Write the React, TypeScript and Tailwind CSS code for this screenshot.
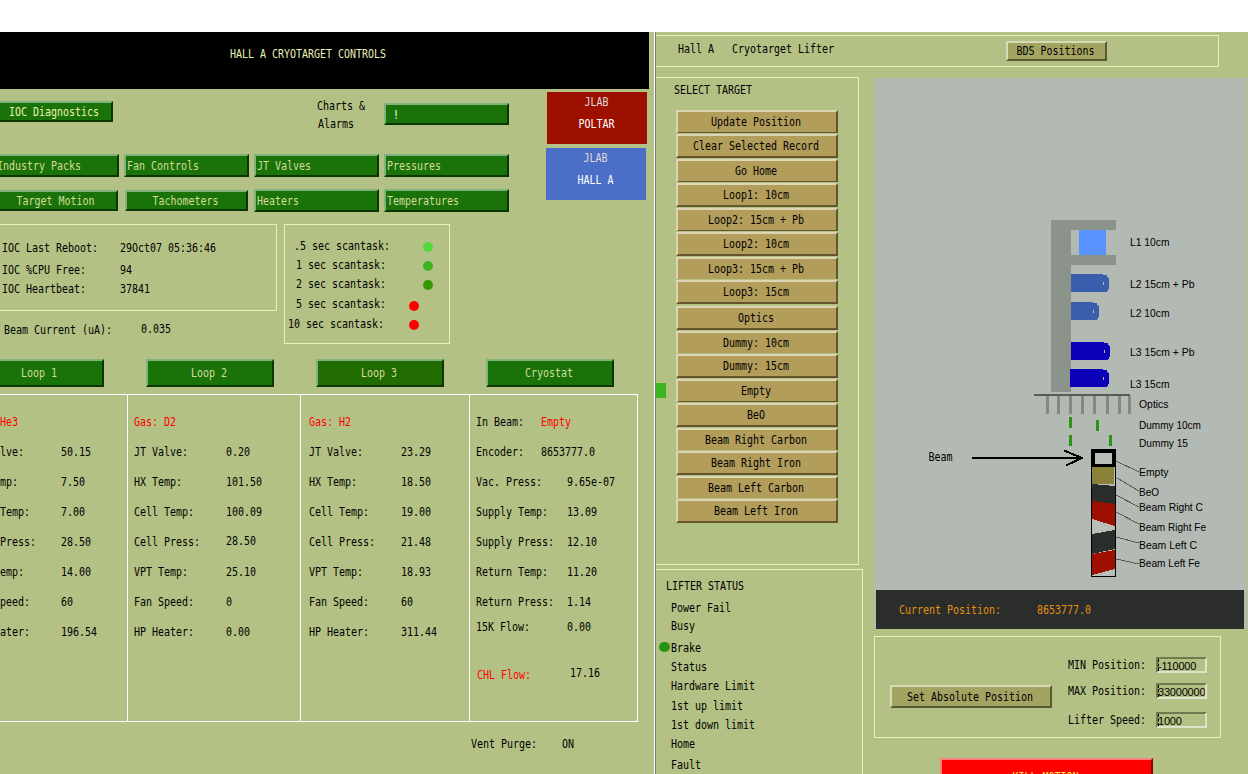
import type { ReactNode } from 'react'
import clsx from 'clsx'

interface TextProps {
  children: ReactNode
  className?: string
}

// Fixed 6x13 terminal cell: narrow glyphs, stretched vertically
function Text({ children, className }: TextProps) {
  return (
    <div
      className={clsx(
        "h-[13px] shrink-0 scale-y-125 whitespace-pre font-['DejaVu_Sans_Mono',monospace] text-[10px] leading-[13px] tracking-[-0.02px]",
        className
      )}
    >
      {children}
    </div>
  )
}

const tones = {
  green: 'bg-[#1a7309] text-[#d4db9d] border-t-[#80b37b] border-l-[#80b37b] border-r-[#0b3604] border-b-[#0b3604]',
  active: 'bg-[#216c00] text-[#d4db9d] border-t-[#80b37b] border-l-[#80b37b] border-r-[#0b3604] border-b-[#0b3604]',
  tan: 'bg-[#b39d5b] text-black border-t-[#ddd6b4] border-l-[#ddd6b4] border-r-[#64552f] border-b-[#64552f]',
  olive: 'bg-[#a4a462] text-black border-t-[#d8d9b6] border-l-[#d8d9b6] border-r-[#5a5a37] border-b-[#5a5a37]',
  red: 'bg-[#fd0000] text-[#fbf34a] border-t-[#ff7f7f] border-l-[#ff7f7f] border-r-[#820400] border-b-[#820400]',
}

interface ButtonProps {
  label: string
  className: string
  tone?: keyof typeof tones
  left?: boolean
}

function Button({ label, className, tone = 'green', left }: ButtonProps) {
  return (
    <button
      className={clsx(
        'flex shrink-0 items-start border-2',
        left ? 'justify-start pl-px' : 'justify-center pr-[2px]',
        tones[tone],
        className
      )}
    >
      <Text>{label}</Text>
    </button>
  )
}

const scanTasks = [
  { label: '.5 sec scantask:', row: 'mt-[14px] ml-[9px]', dot: 'ml-[33px] mt-[3px] bg-[#52da3b]' },
  { label: '1 sec scantask:', row: 'mt-[6px] ml-[11px]', dot: 'ml-[37px] mt-[3px] bg-[#3cb420]' },
  { label: '2 sec scantask:', row: 'mt-[6px] ml-[11px]', dot: 'ml-[37px] mt-[3px] bg-[#339900]' },
  { label: '5 sec scantask:', row: 'mt-[7px] ml-[11px]', dot: 'ml-[23px] mt-[4px] bg-[#fd0000]' },
  { label: '10 sec scantask:', row: 'mt-[7px] ml-[3px]', dot: 'ml-[25px] mt-[3px] bg-[#fd0000]' },
]

interface Reading {
  label: string
  value?: string
  row?: string
  labelClass?: string
  valueClass?: string
}

const loopLabels = ['JT Valve:', 'HX Temp:', 'Cell Temp:', 'Cell Press:', 'VPT Temp:', 'Fan Speed:', 'HP Heater:']

const loopReadings = (gas: string, values: string[]): Reading[] => [
  { label: `Gas: ${gas}`, labelClass: 'text-[#fd0000]' },
  ...loopLabels.map((label, i) => ({ label, value: values[i] })),
]

const loop1 = loopReadings('He3', ['50.15', '7.50', '7.00', '28.50', '14.00', '60', '196.54'])
const loop2 = loopReadings('D2', ['0.20', '101.50', '100.09', '28.50', '25.10', '0', '0.00'])
loop2[4].valueClass = '-mt-px'
const loop3 = loopReadings('H2', ['23.29', '18.50', '19.00', '21.48', '18.93', '60', '311.44'])

const cryostat: Reading[] = [
  { label: 'In Beam:', value: 'Empty', valueClass: '-ml-[26px] text-[#fd0000]' },
  { label: 'Encoder:', value: '8653777.0', valueClass: '-ml-[26px]' },
  { label: 'Vac. Press:', value: '9.65e-07' },
  { label: 'Supply Temp:', value: '13.09' },
  { label: 'Supply Press:', value: '12.10' },
  { label: 'Return Temp:', value: '11.20' },
  { label: 'Return Press:', value: '1.14' },
  { label: '15K Flow:', value: '0.00', row: 'mt-3' },
  { label: 'CHL Flow:', value: '17.16', row: 'mt-[33px]', labelClass: 'mt-[2px] pl-px text-[#fd0000]', valueClass: 'ml-[3px]' },
]

function Readings({ rows, className, labelWidth }: { rows: Reading[]; className: string; labelWidth: string }) {
  return (
    <div className={clsx('shrink-0 border-white pt-5', className)}>
      {rows.map((r, i) => (
        <div key={r.label} className={clsx('flex items-start', i > 0 && (r.row ?? 'mt-[17px]'))}>
          <Text className={clsx(labelWidth, r.labelClass)}>{r.label}</Text>
          {r.value && <Text className={r.valueClass}>{r.value}</Text>}
        </div>
      ))}
    </div>
  )
}

function ControlsPanel() {
  return (
    <div className="h-[742px] w-[654px] shrink-0 overflow-hidden">
      <div className="h-[57px] w-[649px] bg-black pl-[230px] pt-[15px] text-[#ebf1b5]">
        <Text>HALL A CRYOTARGET CONTROLS</Text>
      </div>

      <div className="flex">
        <div className="w-[509px] shrink-0">
          <div className="flex h-[65px] items-start">
            <Button label="IOC Diagnostics" className="-ml-[3px] mt-3 h-[21px] w-[116px] pt-[2px] text-[#ebf1b5]" />
            <div className="ml-[204px] w-[67px] pt-[10px]">
              <Text>{'Charts &'}</Text>
              <Text className="ml-px mt-[5px]">Alarms</Text>
            </div>
            <Button label=" !" left className="mt-[14px] h-[22px] w-[125px] pt-[3px] text-white" />
          </div>
          <div className="-ml-[6px] flex gap-[5px]">
            {['Industry Packs', 'Fan Controls', 'JT Valves', 'Pressures'].map((label) => (
              <Button key={label} label={label} left className="h-[23px] w-[125px] pt-[3px]" />
            ))}
          </div>
          <div className="-ml-[5px] mt-3 flex items-start">
            <Button label="Target Motion" className="mt-px h-[21px] w-[123px] pt-[2px]" />
            <Button label="Tachometers" className="ml-[7px] mt-px h-[21px] w-[123px] pt-[2px]" />
            <Button label="Heaters" left className="ml-[6px] h-[23px] w-[125px] pt-[3px]" />
            <Button label="Temperatures" left className="ml-[5px] h-[23px] w-[125px] pt-[3px]" />
          </div>
        </div>
        <div className="ml-[37px] mt-[3px] flex flex-col gap-1 text-white">
          <div className="ml-px flex h-[52px] w-[100px] flex-col items-center gap-[9px] bg-[#9d1000] pr-px pt-[3px]">
            <Text className="text-[#dadada]">JLAB</Text>
            <Text>POLTAR</Text>
          </div>
          <div className="flex h-[52px] w-[100px] flex-col items-center gap-[9px] bg-[#4b6ec7] pr-px pt-[3px]">
            <Text className="text-[#dadada]">JLAB</Text>
            <Text>HALL A</Text>
          </div>
        </div>
      </div>

      <div className="mt-3 flex items-start">
        <div className="w-[284px] shrink-0">
          <div className="-ml-[3px] h-[87px] w-[280px] border border-[#ebf1b5] pl-1 pt-4">
            <div className="flex">
              <Text className="w-[118px]">IOC Last Reboot:</Text>
              <Text>29Oct07 05:36:46</Text>
            </div>
            <div className="mt-[9px] flex">
              <Text className="w-[118px]">IOC %CPU Free:</Text>
              <Text>94</Text>
            </div>
            <div className="mt-[6px] flex">
              <Text className="w-[118px]">IOC Heartbeat:</Text>
              <Text>37841</Text>
            </div>
          </div>
          <div className="ml-1 mt-3 flex items-start">
            <Text className="w-[137px]">Beam Current (uA):</Text>
            <Text className="-mt-px">0.035</Text>
          </div>
        </div>
        <div className="h-[120px] w-[166px] border border-[#ebf1b5]">
          {scanTasks.map((task) => (
            <div key={task.label} className={clsx('flex h-[13px] items-start', task.row)}>
              <Text>{task.label}</Text>
              <div className={clsx('size-[10px] shrink-0 rounded-full', task.dot)} />
            </div>
          ))}
        </div>
      </div>

      <div className="-ml-6 mt-[15px] flex gap-[42px]">
        <Button label="Loop 1" className="h-7 w-32 pt-[5px]" />
        <Button label="Loop 2" className="h-7 w-32 pt-[5px]" />
        <Button label="Loop 3" tone="active" className="h-7 w-32 pt-[5px]" />
        <Button label="Cryostat" className="h-7 w-32 pt-[5px]" />
      </div>

      <div className="mt-[7px] flex h-[328px] w-[638px] border-y border-white">
        <Readings rows={loop1} className="-ml-[30px] w-[157px]" labelWidth="w-[91px]" />
        <Readings rows={loop2} className="w-[173px] border-l pl-[6px]" labelWidth="w-[92px]" />
        <Readings rows={loop3} className="w-[169px] border-l pl-2" labelWidth="w-[92px]" />
        <Readings rows={cryostat} className="w-[169px] border-x pl-[6px]" labelWidth="w-[91px]" />
      </div>

      <div className="ml-[471px] mt-[15px] flex">
        <Text className="w-[91px]">Vent Purge:</Text>
        <Text>ON</Text>
      </div>
    </div>
  )
}

// Slots are 22-24px tall, the shorter ones clip the bottom bevel of the button
const targets = [
  { label: 'Update Position', slot: 'h-[23px]' },
  { label: 'Clear Selected Record', slot: 'h-[24px]' },
  { label: 'Go Home', slot: 'h-[23px]' },
  { label: 'Loop1: 10cm', slot: 'h-[24px]' },
  { label: 'Loop2: 15cm + Pb', slot: 'h-[23px]' },
  { label: 'Loop2: 10cm', slot: 'h-[24px]' },
  { label: 'Loop3: 15cm + Pb', slot: 'h-[22px]' },
  { label: 'Loop3: 15cm', slot: 'h-[24px] mb-px' },
  { label: 'Optics', slot: 'h-[24px]' },
  { label: 'Dummy: 10cm', slot: 'h-[22px]' },
  { label: 'Dummy: 15cm', slot: 'h-[24px]' },
  { label: 'Empty', slot: 'h-[23px]' },
  { label: 'BeO', slot: 'h-[24px]' },
  { label: 'Beam Right Carbon', slot: 'h-[22px]' },
  { label: 'Beam Right Iron', slot: 'h-[24px]' },
  { label: 'Beam Left Carbon', slot: 'h-[22px]' },
  { label: 'Beam Left Iron', slot: 'h-[24px]' },
]

const statuses = [
  { label: 'Power Fail', row: 'mt-[9px]' },
  { label: 'Busy', row: 'mt-[5px]' },
  { label: 'Brake', row: 'mt-[9px]', on: true },
  { label: 'Status', row: 'mt-[6px]' },
  { label: 'Hardware Limit', row: 'mt-[6px]' },
  { label: '1st up limit', row: 'mt-[7px]' },
  { label: '1st down limit', row: 'mt-[6px]' },
  { label: 'Home', row: 'mt-[6px]' },
  { label: 'Fault', row: 'mt-[8px]' },
]

const labels = [
  { text: 'L1 10cm', x: 1130, y: 246, w: 39.5 },
  { text: 'L2 15cm + Pb', x: 1130, y: 288, w: 64.5 },
  { text: 'L2 10cm', x: 1130, y: 317, w: 39.5 },
  { text: 'L3 15cm + Pb', x: 1130, y: 356, w: 64.5 },
  { text: 'L3 15cm', x: 1130, y: 388, w: 39.5 },
  { text: 'Optics', x: 1139, y: 408, w: 29.5 },
  { text: 'Dummy 10cm', x: 1139, y: 429, w: 62 },
  { text: 'Dummy 15', x: 1139, y: 447, w: 49 },
  { text: 'Empty', x: 1139, y: 476, w: 29.5 },
  { text: 'BeO', x: 1139, y: 496, w: 20 },
  { text: 'Beam Right C', x: 1139, y: 511, w: 64 },
  { text: 'Beam Right Fe', x: 1139, y: 531, w: 67 },
  { text: 'Beam Left C', x: 1139, y: 549, w: 58 },
  { text: 'Beam Left Fe', x: 1139, y: 567, w: 61 },
]

const cells = [
  { x: 1071, y: 274, w: 38, fill: '#3a5eab' },
  { x: 1071, y: 302, w: 28, fill: '#3a5eab' },
  { x: 1071, y: 342, w: 39, fill: '#0a00b8' },
  { x: 1070, y: 369, w: 39, fill: '#0a00b8' },
]

const leaders = [
  [1116, 461, 1139, 472],
  [1117, 478, 1139, 491],
  [1116, 495, 1139, 507],
  [1116, 512, 1139, 524],
  [1116, 537, 1139, 543],
  [1116, 559, 1139, 564],
]

function LifterDiagram() {
  return (
    <svg className="block h-[512px] w-[373px]" viewBox="874 78 373 512">
      <g shapeRendering="crispEdges">
        <path d="M1051 220h65v10h-45v25h45v10h-45v127h-20z" fill="#8b938b" />
        <rect x="1079" y="230" width="27" height="25" fill="#5893ff" />
        {cells.map((c) => (
          <g key={c.y}>
            <path
              d={`M${c.x} ${c.y}h${c.w - 6}v1h4v2h1v1h1v11h-1v2h-1v1h-${c.w - 2}z`}
              fill={c.fill}
            />
            <rect x={c.x + c.w - 6} y={c.y + 8} width="1" height="3" fill="#b3bab3" />
          </g>
        ))}

        <rect x="1034" y="394" width="96" height="2" fill="#5a5a5a" />
        {[1046, 1057, 1069, 1081, 1093, 1106, 1118, 1128].map((x) => (
          <rect key={x} x={x} y="396" width="3" height="18" fill="#858985" />
        ))}
        <path d="M1069 417h3v11h-3zM1096 420h3v11h-3zM1069 435h3v11h-3zM1109 435h3v11h-3z" fill="#289315" />

        <rect x="972" y="457" width="109" height="2" />
        <path d="M1064 450.500L1082 458L1066 465.500" fill="none" stroke="#000" strokeWidth="2" />

        {/* solid target ladder */}
        <rect x="1091.500" y="449.500" width="24" height="127" fill="#b8beb8" stroke="#000" />
        <path d="M1091 449h25v18h-25zM1095 453v11h17v-11z" fillRule="evenodd" />
        <rect x="1092" y="467" width="22" height="17" fill="#8b8239" />
        <path d="M1092 484L1115 486V504L1092 501zM1092 534L1115 530V549L1092 554z" fill="#2a2d2a" />
        <path d="M1092 501L1115 504V526L1092 519zM1092 554L1115 550V569L1092 575z" fill="#9d1000" />
        {leaders.map(([x1, y1, x2, y2]) => (
          <line key={y1} x1={x1} y1={y1} x2={x2} y2={y2} stroke="#5a5a5a" />
        ))}
      </g>

      <g className="font-['Liberation_Sans',sans-serif] text-[11px]">
        {labels.map((l) => (
          <text key={l.text} x={l.x} y={l.y} textLength={l.w} lengthAdjust="spacingAndGlyphs">
            {l.text}
          </text>
        ))}
      </g>
      <text
        x="928.5"
        y="369"
        transform="scale(1 1.25)"
        className="font-['DejaVu_Sans_Mono',monospace] text-[10px]"
      >
        Beam
      </text>
    </svg>
  )
}

function Field({ label, value, className }: { label: string; value: string; className?: string }) {
  return (
    <div className={clsx('flex items-start', className)}>
      <Text className="mt-px w-[88px]">{label}</Text>
      <div className="h-4 w-[51px] overflow-hidden border-2 border-b-[#dde3cb] border-l-[#6f7a50] border-r-[#dde3cb] border-t-[#6f7a50]">
        <div className="h-3 whitespace-nowrap border-l border-dashed border-black font-['Liberation_Sans',sans-serif] text-[11px] leading-[15px] tracking-[-0.2px]">
          <span className="-ml-px">{value}</span>
        </div>
      </div>
    </div>
  )
}

function LifterPanel() {
  return (
    <div className="h-[742px] w-[592px] shrink-0 overflow-hidden">
      <div className="mt-[3px] flex h-8 w-[563px] items-start border-y border-r border-[#ebf1b5]">
        <Text className="ml-[22px] mt-[6px]">{'Hall A   Cryotarget Lifter'}</Text>
        <Button label="BDS Positions" tone="olive" className="ml-[172px] mt-[5px] h-5 w-[101px] pt-px" />
      </div>

      <div className="flex items-start">
        <div className="w-[218px] shrink-0">
          <div className="mt-[10px] h-[488px] w-[203px] border-y border-r border-[#ebf1b5] pt-[5px]">
            <Text className="ml-[18px]">SELECT TARGET</Text>
            <div className="mt-[14px] flex items-start">
              <div className="w-5 shrink-0">
                <div className="mt-[273px] h-[15px] w-[10px] bg-[#3cb420]" />
              </div>
              <div className="flex w-[162px] flex-col gap-px">
                {targets.map((target) => (
                  <div key={target.label} className={clsx('overflow-hidden', target.slot)}>
                    <Button label={target.label} tone="tan" className="h-6 w-[162px] pt-[3px]" />
                  </div>
                ))}
              </div>
            </div>
          </div>

          <div className="mt-1 h-[210px] w-[207px] border-r border-t border-[#ebf1b5] pt-[9px]">
            <Text className="ml-[10px]">LIFTER STATUS</Text>
            {statuses.map((status) => (
              <div key={status.label} className={clsx('flex items-start', status.row)}>
                <div className="w-[15px] shrink-0 pl-[3px] pt-px">
                  {status.on && <div className="h-[10px] w-[11px] rounded-full bg-[#289315]" />}
                </div>
                <Text>{status.label}</Text>
              </div>
            ))}
          </div>
        </div>

        <div className="shrink-0">
          <div className="mt-[11px] h-[551px] w-[373px] bg-[#b3bab3]">
            <LifterDiagram />
            <div className="ml-[2px] flex h-[39px] w-[368px] bg-[#2a2d2a] pl-[23px] pt-[13px] text-[#e19015]">
              <Text className="w-[138px]">Current Position:</Text>
              <Text>8653777.0</Text>
            </div>
          </div>

          <div className="mt-[7px] flex h-[102px] w-[347px] items-start border border-[#ebf1b5]">
            <Button label="Set Absolute Position" tone="olive" className="ml-[15px] mt-[48px] h-[23px] w-[162px] pt-[3px]" />
            <div className="ml-4 mt-5">
              <Field label="MIN Position:" value="-110000" />
              <Field label="MAX Position:" value="33000000" className="mt-[10px]" />
              <Field label="Lifter Speed:" value="1000" className="mt-[13px]" />
            </div>
          </div>

          <Button label="KILL MOTION" tone="red" className="ml-[66px] mt-5 h-8 w-[213px] pt-[10px]" />
        </div>
      </div>
    </div>
  )
}

export default function App() {
  return (
    <div className="h-[774px] w-[1248px] overflow-hidden bg-white pt-8">
      <div className="flex h-[742px] bg-[#b4c184] text-black">
        <ControlsPanel />
        <div className="w-px shrink-0 bg-white" />
        <div className="w-px shrink-0 bg-[#787878]" />
        <LifterPanel />
      </div>
    </div>
  )
}
